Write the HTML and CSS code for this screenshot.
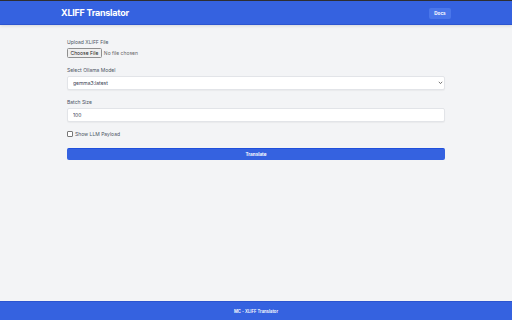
FILE: index.html
```html
<!DOCTYPE html>
<html lang="en">
<head>
<meta charset="utf-8">
<title>XLIFF Translator</title>
<link rel="stylesheet" href="styles.css">
</head>
<body>
<div class="page">
  <div class="topstrip"></div>
  <header class="header">
    <div class="header-inner">
      <h1 class="title">XLIFF Translator</h1>
      <a class="docs" href="#">Docs</a>
    </div>
  </header>
  <main class="main">
    <form class="form">
      <div class="group">
        <label class="label">Upload XLIFF File</label>
        <div class="file">
          <span class="file-btn">Choose File</span>
          <span class="file-name">No file chosen</span>
        </div>
      </div>
      <div class="group">
        <label class="label">Select Ollama Model</label>
        <div class="select-wrap">
          <select class="select"><option>gemma3:latest</option></select>
          <svg class="chev" width="5" height="4" viewBox="0 0 5 4"><path d="M0.8 0.8 L2.5 2.6 L4.2 0.8" fill="none" stroke="#555" stroke-width="0.8"/></svg>
        </div>
      </div>
      <div class="group">
        <label class="label">Batch Size</label>
        <input class="input" type="text" value="100">
      </div>
      <div class="check-row">
        <span class="checkbox"></span>
        <span class="check-label">Show LLM Payload</span>
      </div>
      <button class="translate" type="button">Translate</button>
    </form>
  </main>
  <footer class="footer">MC - XLIFF Translator</footer>
</div>
</body>
</html>
```
FILE: styles.css
```css
* { box-sizing: border-box; }
html, body { margin: 0; padding: 0; }
body {
  font-family: Inter, "Liberation Sans", Arial, sans-serif;
  background: #f3f4f6;
  color: #374151;
}
.page {
  min-height: 320px;
  display: flex;
  flex-direction: column;
}
.topstrip { height: 1px; background: #2f2f33; }
.header {
  background: #3562e0;
  height: 24px;
  border-bottom: 1px solid #2c55cf;
  box-shadow: 0 1px 3px rgba(0,0,0,0.12);
}
.header-inner {
  width: 390px;
  margin: 0 auto;
  height: 100%;
  display: flex;
  align-items: center;
  justify-content: space-between;
}
.title {
  margin: 0;
  font-size: 9px;
  font-weight: 700;
  color: #fff;
  letter-spacing: -0.25px;
  padding-bottom: 1px;
}
.docs {
  display: block;
  background: #4a76ea;
  color: #fff;
  font-size: 4.6px;
  font-weight: 700;
  text-decoration: none;
  width: 22px;
  height: 11px;
  line-height: 11px;
  text-align: center;
  border-radius: 2px;
  margin-top: 1px;
}
.main { padding-top: 13px; }
.form {
  width: 378px;
  margin: 0 auto;
  display: flex;
  flex-direction: column;
}
.group {
  display: flex;
  flex-direction: column;
  margin-bottom: 8px;
}
.label {
  font-size: 5px;
  line-height: 8px;
  color: #4b5563;
  margin-bottom: 2px;
}
.file {
  display: flex;
  align-items: center;
  height: 10px;
  gap: 2px;
}
.file-btn {
  font-size: 5px;
  color: #222;
  background: #efefef;
  border: 1px solid #8f8f8f;
  border-radius: 1.5px;
  height: 10px;
  line-height: 8px;
  padding: 0 2.5px;
}
.file-name { font-size: 5px; color: #666; }
.select-wrap { position: relative; }
.select, .input {
  display: block;
  width: 100%;
  height: 14px;
  border: 1px solid #e2e4e8;
  border-radius: 2px;
  background: #fff;
  font-family: inherit;
  font-size: 5px;
  color: #374151;
  padding: 0 5px;
  box-shadow: 0 1px 1px rgba(0,0,0,0.04);
  margin: 0;
  outline: none;
}
.select { appearance: none; -webkit-appearance: none; }
.chev { position: absolute; right: 2px; top: 5px; }
.check-row {
  display: flex;
  align-items: center;
  height: 8px;
  margin: 0 0 10px;
  gap: 2px;
}
.checkbox {
  width: 6px;
  height: 6px;
  border: 0.8px solid #777;
  border-radius: 1px;
  background: #fff;
}
.check-label { font-size: 5px; color: #4b5563; }
.translate {
  display: block;
  height: 12px;
  width: 100%;
  border: none;
  border-top: 1.5px solid #1f4fdc;
  border-radius: 2px;
  background: #3562e0;
  color: #fff;
  font-family: inherit;
  font-size: 4.6px;
  font-weight: 700;
  padding: 0;
}
.footer {
  margin-top: auto;
  height: 19px;
  background: #3562e0;
  border-top: 1px solid #2c55cf;
  color: #fff;
  font-size: 4.2px;
  font-weight: 600;
  display: flex;
  align-items: center;
  justify-content: center;
}
```
